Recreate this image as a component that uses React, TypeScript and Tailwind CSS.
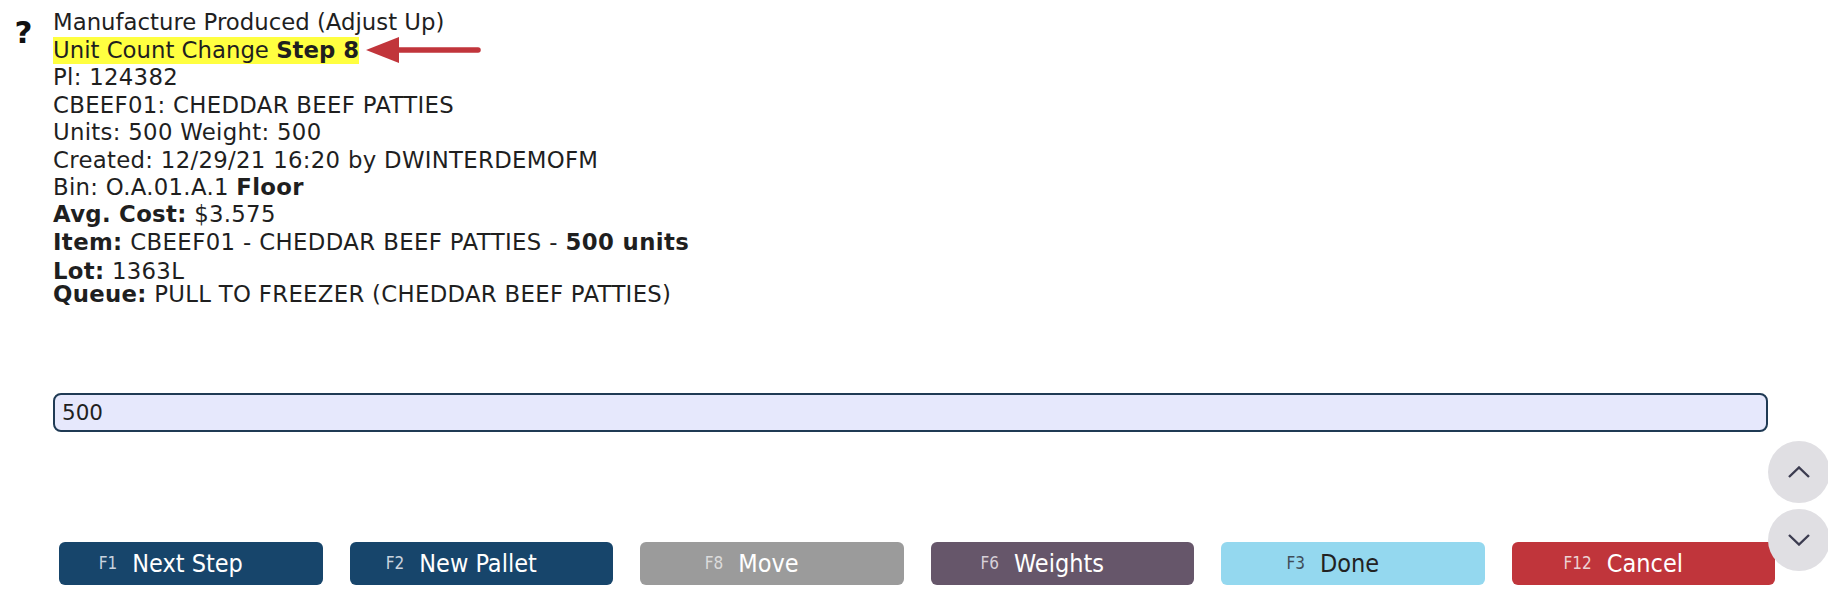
import React from "react";

const body = { fontFamily: '"DejaVu Sans", Verdana, sans-serif' };
const cond = { fontFamily: '"DejaVu Sans Condensed", "DejaVu Sans", sans-serif' };

function Btn({ fkey, label, cls, txt, keyCls }: { fkey: string; label: string; cls: string; txt: string; keyCls: string }) {
  return (
    <button
      className={`h-[43px] rounded-[6px] flex items-center justify-center pr-[40px] ${cls}`}
      style={cond}
    >
      <span className={`text-[17px] leading-none mr-[15px] ${keyCls}`}>{fkey}</span>
      <span className={`text-[25px] leading-none ${txt}`}>{label}</span>
    </button>
  );
}

export default function App() {
  return (
    <div className="relative w-full h-[601px] bg-white overflow-hidden text-[#1f1f1f]" style={body}>
      <div className="flex pt-[9px]">
        <div className="w-[53px] shrink-0 flex justify-center pr-[6px]">
          <span className="text-[31px] font-bold leading-[27px] mt-[10px] text-[#111]">?</span>
        </div>
        <div className="text-[22.8px] leading-[27.4px]">
          <div>Manufacture Produced (Adjust Up)</div>
          <div className="flex items-center">
            <span className="bg-[#ffff40]">
              Unit Count Change <b>Step 8</b>
            </span>
            <svg width="118" height="28" viewBox="0 0 118 28" className="ml-[7px]">
              <line x1="30" y1="14" x2="112" y2="14" stroke="#c1353b" strokeWidth="5.5" strokeLinecap="round" />
              <polygon points="0,14 33,1 33,27" fill="#c1353b" />
            </svg>
          </div>
          <div className="tracking-[0.3px]">
            <div>Pl: 124382</div>
            <div>CBEEF01: CHEDDAR BEEF PATTIES</div>
            <div>Units: 500 Weight: 500</div>
            <div>Created: 12/29/21 16:20 by DWINTERDEMOFM</div>
            <div>
              Bin: O.A.01.A.1 <b>Floor</b>
            </div>
            <div>
              <b>Avg. Cost:</b> $3.575
            </div>
            <div className="tracking-[0.38px]">
              <b>Item:</b> CBEEF01 - CHEDDAR BEEF PATTIES - <b>500 units</b>
            </div>
            <div className="mt-[2px]">
              <b>Lot:</b> 1363L
            </div>
            <div className="-mt-[5px]">
              <b>Queue:</b> PULL TO FREEZER (CHEDDAR BEEF PATTIES)
            </div>
          </div>
        </div>
      </div>

      <div className="ml-[53px] mt-[85px] w-[1715px] h-[39px] rounded-[8px] border-2 border-[#1f3a54] bg-[#e6e8fc] flex items-center px-[7px]">
        <span className="text-[21.5px] leading-none text-[#1f1f1f]">500</span>
      </div>

      <div className="ml-[59px] mt-[110px] w-[1716px] grid grid-cols-6 gap-[27px]">
        <Btn fkey="F1" label="Next Step" cls="bg-[#17456b]" txt="text-white" keyCls="text-[#c9d3df]" />
        <Btn fkey="F2" label="New Pallet" cls="bg-[#17456b]" txt="text-white" keyCls="text-[#c9d3df]" />
        <Btn fkey="F8" label="Move" cls="bg-[#9b9b9b]" txt="text-white" keyCls="text-[#dcdcdc]" />
        <Btn fkey="F6" label="Weights" cls="bg-[#66566a]" txt="text-white" keyCls="text-[#d6d0d8]" />
        <Btn fkey="F3" label="Done" cls="bg-[#94d8ef]" txt="text-[#222]" keyCls="text-[#3f4d58]" />
        <Btn fkey="F12" label="Cancel" cls="bg-[#c0353b]" txt="text-white" keyCls="text-[#ecd2d3]" />
      </div>

      <button className="absolute left-[1768px] top-[441px] w-[62px] h-[62px] rounded-full bg-[#e0dfe3] flex items-center justify-center">
        <svg width="22" height="12" viewBox="0 0 22 12">
          <polyline points="1,11 11,1.5 21,11" fill="none" stroke="#3c3c50" strokeWidth="2.4" />
        </svg>
      </button>
      <button className="absolute left-[1768px] top-[509px] w-[62px] h-[62px] rounded-full bg-[#e0dfe3] flex items-center justify-center">
        <svg width="22" height="12" viewBox="0 0 22 12">
          <polyline points="1,1 11,10.5 21,1" fill="none" stroke="#3c3c50" strokeWidth="2.4" />
        </svg>
      </button>
    </div>
  );
}
